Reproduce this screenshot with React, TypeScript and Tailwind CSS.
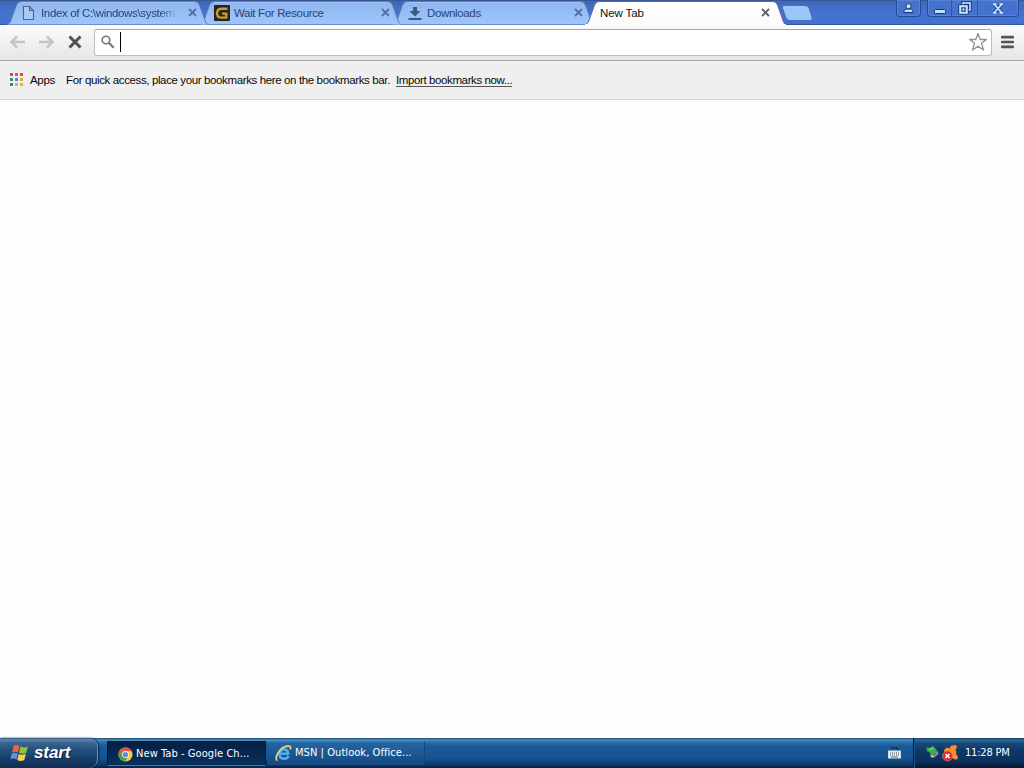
import type { ReactNode } from "react";

function TabShape({ active = false }: { active?: boolean }) {
  return (
    <svg className="absolute inset-0 h-[25px] w-[200px] overflow-visible" viewBox="0 0 200 25">
      <defs>
        <linearGradient id="inactiveTab" x1="0" y1="0" x2="0" y2="1">
          <stop offset="0" stopColor="#8fb5f0" />
          <stop offset="1" stopColor="#9fc6fb" />
        </linearGradient>
        <linearGradient id="activeTab" x1="0" y1="0" x2="0" y2="1">
          <stop offset="0" stopColor="#ffffff" />
          <stop offset="1" stopColor="#fbfbfb" />
        </linearGradient>
      </defs>
      <path
        d="M-1 24.5 C2 23.5 2.5 22 3.5 19 L8.5 5 Q10 1.5 13 1.5 H187 Q190 1.5 191.5 5 L196.5 19 C197.5 22 198 24 200 24.5"
        fill={active ? "url(#activeTab)" : "url(#inactiveTab)"}
        stroke={active ? "#56699a" : "#5e7cb4"}
        strokeWidth="1"
      />
      {!active && <path d="M13 2.5 H186" stroke="#a5c6f6" />}
      {active && <path d="M-1 24.5 H200" stroke="#fbfbfb" />}
    </svg>
  );
}

function Cross({ color }: { color: string }) {
  return (
    <svg className="h-[9px] w-[9px] shrink-0" viewBox="0 0 9 9">
      <path d="M1 1 L8 8 M8 1 L1 8" stroke={color} strokeWidth="1.8" />
    </svg>
  );
}

function Tab({ icon, title, active, layer }: { icon?: ReactNode; title: string; active?: boolean; layer: string }) {
  return (
    <div className={`relative h-[25px] w-[193px] shrink-0 ${layer}`}>
      <TabShape active={active} />
      <div className={`relative flex h-[25px] items-center ${active ? "pr-[9px] pl-[14px]" : "pr-[4px] pl-[13px]"}`}>
        {icon && <span className="mr-[4px] flex w-[16px] shrink-0 justify-center">{icon}</span>}
        <span
          className={`min-w-0 flex-1 text-[11.5px] leading-[16px] whitespace-nowrap ${
            active ? "tracking-[-0.1px] text-[#111]" : "tracking-[-0.34px] text-[#29446f]"
          } ${title.startsWith("Index") ? "[mask-image:linear-gradient(to_right,black_87%,transparent)]" : ""}`}
        >
          {title}
        </span>
        <span className="ml-[10px] flex">
          <Cross color={active ? "#626262" : "#53719f"} />
        </span>
      </div>
    </div>
  );
}

function PageIcon() {
  return (
    <svg className="h-[16px] w-[14px]" viewBox="0 0 14 16">
      <path d="M1.5 1.5 H7.5 L11.5 5.5 V14.5 H1.5 Z M7.5 1.5 V5.5 H11.5" fill="#a9c9f6" stroke="#52647d" strokeWidth="1.1" />
    </svg>
  );
}

function GIcon() {
  return (
    <svg className="h-[16px] w-[16px]" viewBox="0 0 16 16">
      <rect width="16" height="16" rx="1" fill="#27251f" />
      <path d="M13.5 3.7 H7 Q3.3 4 3 8 Q3 12.3 6.5 12.6 H12.2 V8.6 H8" fill="none" stroke="#c99d2b" strokeWidth="2.4" />
    </svg>
  );
}

function DownloadIcon() {
  return (
    <svg className="h-[14px] w-[14px]" viewBox="0 0 14 14">
      <path d="M5 1 H9 V5 H12.5 L7 10.5 L1.5 5 H5 Z M0.5 12 H13.5 V14 H0.5 Z" fill="#3c5979" />
    </svg>
  );
}

function WindowButtons() {
  return (
    <div className="-mt-px ml-auto flex h-[17px] items-start">
      <div className="mr-[6px] flex h-[17px] w-[25px] items-center justify-center rounded-b-[4px] border border-t-0 border-[#244b9f] bg-[#4572cc] shadow-[inset_0_0_0_1px_#5882d6]">
        <svg className="h-[11px] w-[11px]" viewBox="0 0 11 11">
          <path d="M1 8.2 Q1 6 5.5 6 Q10 6 10 8.2 V9.5 H1 Z" fill="#c4e3fc" stroke="#153572" />
          <circle cx="5.5" cy="3.2" r="2.6" fill="#c4e3fc" stroke="#153572" />
        </svg>
      </div>
      <div className="mr-[5px] flex h-[17px] overflow-hidden rounded-b-[4px] border border-t-0 border-[#244b9f] bg-[#4572cc] shadow-[inset_0_0_0_1px_#5882d6]">
        <div className="flex w-[24px] items-center justify-center border-r border-[#2d57ab]">
          <svg className="h-[13px] w-[12px]" viewBox="0 0 12 13">
            <rect x=".5" y="7.5" width="11" height="4" rx="1" fill="#c4e3fc" stroke="#153572" />
          </svg>
        </div>
        <div className="flex w-[26px] justify-center border-r border-[#2d57ab] pt-[1px]">
          <svg className="h-[14px] w-[14px]" viewBox="0 0 14 14">
            <rect x="5" y="2" width="7" height="7" fill="none" stroke="#153572" strokeWidth="3.4" />
            <rect x="5" y="2" width="7" height="7" fill="none" stroke="#c4e3fc" strokeWidth="1.6" />
            <rect x="2.2" y="5.2" width="6.6" height="6.6" fill="#35599e" stroke="#153572" strokeWidth="3.6" />
            <rect x="2.2" y="5.2" width="6.6" height="6.6" fill="#254c91" stroke="#c4e3fc" strokeWidth="2" />
            <rect x="4.5" y="7.5" width="2" height="2" fill="#c4e3fc" />
          </svg>
        </div>
        <div className="flex w-[40px] items-center justify-center">
          <svg className="h-[11px] w-[12px]" viewBox="0 0 12 11">
            <path d="M2.5 1.5 L9.5 9.5 M9.5 1.5 L2.5 9.5" stroke="#2a4f99" strokeWidth="4" />
            <path d="M2.5 1.5 L9.5 9.5 M9.5 1.5 L2.5 9.5 M1 1.2 H4.4 M7.6 1.2 H11 M1 9.8 H4.4 M7.6 9.8 H11" stroke="#c4e3fc" strokeWidth="1.8" />
          </svg>
        </div>
      </div>
    </div>
  );
}

function TitleBar() {
  return (
    <div className="relative flex h-[25px] border-t border-[#3a5795] bg-linear-to-b from-[#3e67b8] via-[#4473ce] to-[#4170cf] shadow-[inset_0_-1px_0_#33569e]">
      <div className="-mt-px flex pl-[8px]">
        <Tab layer="z-30" icon={<PageIcon />} title="Index of C:\windows\system" />
        <Tab layer="z-20" icon={<GIcon />} title="Wait For Resource" />
        <Tab layer="z-10" icon={<DownloadIcon />} title="Downloads" />
        <div className="relative z-40 -ml-px">
          <Tab layer="z-40" title="New Tab" active />
        </div>
        <svg className="mt-[5px] ml-[2px] h-[16px] w-[32px]" viewBox="0 0 32 16">
          <path d="M3 .5 H24 Q27 .5 28 3 L31 12 Q32 15.5 29 15.5 H9 Q6 15.5 5 13 L1.5 3 Q1 .5 3 .5 Z" fill="#9cc5fa" stroke="#4870b7" />
        </svg>
      </div>
      <WindowButtons />
    </div>
  );
}

function Toolbar() {
  return (
    <div className="flex h-[36px] items-center border-b border-[#a6a6a6] bg-linear-to-b from-[#fbfbfb] to-[#e6e6e6] pb-px">
      <svg className="ml-[9px] h-[14px] w-[17px]" viewBox="0 0 17 14">
        <path d="M16 7 H3 M8 1.5 L2.5 7 L8 12.5" fill="none" stroke="#c4c4c4" strokeWidth="2.5" />
      </svg>
      <svg className="ml-[12px] h-[14px] w-[17px]" viewBox="0 0 17 14">
        <path d="M1 7 H14 M9 1.5 L14.5 7 L9 12.5" fill="none" stroke="#c4c4c4" strokeWidth="2.5" />
      </svg>
      <svg className="ml-[13px] h-[14px] w-[14px]" viewBox="0 0 14 14">
        <path d="M1.5 1.5 L12.5 12.5 M12.5 1.5 L1.5 12.5" stroke="#505050" strokeWidth="3" />
      </svg>
      <div className="ml-[12px] flex h-[27px] w-[898px] items-center rounded-[3px] border border-[#bcbcbc] border-t-[#a7a7a7] bg-white">
        <svg className="ml-[6px] h-[14px] w-[14px]" viewBox="0 0 14 14">
          <circle cx="5" cy="5" r="3.8" fill="none" stroke="#777" strokeWidth="1.6" />
          <path d="M8 8 L12.7 12.7" stroke="#777" strokeWidth="2.3" />
        </svg>
        <div className="ml-[5px] h-[20px] w-px bg-black" />
        <svg className="mr-[3px] ml-auto h-[20px] w-[20px]" viewBox="0 0 20 20">
          <path
            d="M10 1.5 L12.2 7.5 H18.3 L13.5 11.3 L15.5 18 L10 14.2 L4.5 18 L6.5 11.3 L1.7 7.5 H7.8 Z"
            fill="#fff"
            stroke="#8f8f8f"
            strokeWidth="1.3"
            strokeLinejoin="round"
          />
        </svg>
      </div>
      <svg className="ml-[9px] h-[14px] w-[13px]" viewBox="0 0 13 14">
        <path d="M1.2 2.2 H11.8 M1.2 7 H11.8 M1.2 11.8 H11.8" stroke="#555" strokeWidth="2.7" strokeLinecap="round" />
      </svg>
    </div>
  );
}

function AppsIcon() {
  const colors = ["#d84a49", "#df5558", "#d94749", "#2b9c68", "#3e87dc", "#e1af29", "#2b9c55", "#e1b532", "#e1b532"];
  return (
    <svg className="-mt-px h-[13px] w-[13px]" viewBox="0 0 13 13">
      {colors.map((color, i) => (
        <rect key={i} x={(i % 3) * 5} y={Math.floor(i / 3) * 5} width="3" height="3" fill={color} />
      ))}
    </svg>
  );
}

function BookmarksBar() {
  return (
    <div className="flex h-[39px] items-center border-b border-[#d6d6d6] bg-[#efefef] pl-[10px] text-[11.5px] whitespace-nowrap text-[#080808]">
      <AppsIcon />
      <span className="mt-px ml-[7px] w-[36px] tracking-[-0.3px]">Apps</span>
      <span className="mt-px w-[330px] tracking-[-0.375px]">For quick access, place your bookmarks here on the bookmarks bar.</span>
      <span className="border-b border-[#555] leading-[12px] tracking-[-0.39px]">Import bookmarks now...</span>
    </div>
  );
}

function WindowsFlag() {
  return (
    <svg className="h-[18px] w-[19px]" viewBox="0 0 18 18">
      <path d="M3 2 Q6 0 9 2 L7.5 8.5 Q5 7 1.5 8.5 Z" fill="#e7683b" />
      <path d="M10 2.3 Q13 4.5 17.5 2.5 L15.7 8.7 Q12 10.5 8.5 8.8 Z" fill="#8fc641" />
      <path d="M1.2 9.5 Q4 8 7.2 9.7 L6 15.5 Q3 13.7 0 15.5 Z" fill="#5a93e6" />
      <path d="M8.2 10 Q11.5 11.5 15.4 9.7 L13.8 16 Q10 18 6.8 16 Z" fill="#f6d248" />
    </svg>
  );
}

function ChromeIcon() {
  return (
    <svg className="h-[15px] w-[15px] shrink-0" viewBox="0 0 16 16">
      <circle cx="8" cy="8" r="7.5" fill="#f4cb38" />
      <path d="M1.5 4.3 A7.5 7.5 0 0 1 14.5 4.3 L8 4.5 L4.7 10 Z" fill="#df5547" />
      <path d="M1.5 4.3 L5 10 L10.5 10 L7.6 15.5 A7.5 7.5 0 0 1 1.5 4.3 Z" fill="#42a15b" />
      <circle cx="8" cy="8" r="3.7" fill="#f5f5ef" />
      <circle cx="8" cy="8" r="2.8" fill="#4f91da" />
    </svg>
  );
}

function ExplorerIcon() {
  return (
    <svg className="h-[17px] w-[17px] shrink-0" viewBox="0 0 17 17">
      <path d="M13.5 11 Q12.3 13.8 9 13.8 Q4.5 13.5 4.5 9 Q4.9 4.5 9 4.5 Q13 4.5 13 8.8 H5" fill="none" stroke="#4fb0ee" strokeWidth="2.6" />
      <path d="M2.5 15.5 C-1.5 14 4 3 12 1.2 Q17 .3 15 4.5" fill="none" stroke="#efd27a" strokeWidth="1.7" />
    </svg>
  );
}

function KeyboardIcon() {
  return (
    <svg className="h-[14px] w-[13px]" viewBox="0 0 13 14">
      <path d="M3 1 L4.5 2.5 L6 1.5 L7.5 2.5 L9 1.5 L10 3 L9.5 4.5" stroke="#0b1c33" fill="none" />
      <rect x=".5" y="5" width="12" height="7" fill="#f2f2ee" stroke="#d5dce1" />
      <path d="M2 7 H11 M2 9 H11" stroke="#263f57" strokeDasharray="1 1" />
      <path d="M3 11 H10" stroke="#53687b" />
    </svg>
  );
}

function DeviceIcon() {
  return (
    <svg className="-mt-[2px] h-[16px] w-[15px]" viewBox="0 0 15 16">
      <path d="M5 10 L12 6 L13.5 10 L8 14 L5.5 13 Z" fill="#c3cacd" stroke="#4a5862" strokeWidth=".8" />
      <path d="M8 11.5 L12 9" stroke="#354c60" strokeWidth="1.3" />
      <path d="M1.5 3 L4 4 L8 2 L11 5 L12 7 L6 11 L4.5 8 L2 7.5 Z" fill="#35b44f" stroke="#1c7036" strokeWidth=".7" />
      <path d="M4 5.5 L8 4" stroke="#8ae08c" />
    </svg>
  );
}

function AlertIcon() {
  return (
    <svg className="h-[18px] w-[17px]" viewBox="0 0 17 18">
      <path d="M3 5 Q5 3 8 4.5 Q8 1 11 1.5 Q14 0 15 3 L13.5 6 Q15 7.5 14 9.5 L16 13 Q16 16 13 15.5 L10 14 L4 15 L3 9 Q1 7 3 5 Z" fill="#ff8c2b" />
      <circle cx="5.5" cy="12" r="5" fill="#d92d2d" stroke="#f17d65" strokeWidth=".6" />
      <path d="M3.5 10 L7.5 14 M7.5 10 L3.5 14" stroke="#fff" strokeWidth="1.6" />
    </svg>
  );
}

function Taskbar() {
  return (
    <div className="flex h-[30px] items-stretch bg-[linear-gradient(to_bottom,#16456d_0px,#4e91bd_2px,#2e71aa_4px,#195a98_8px,#165493_20px,#0c3867_27px,#071f3d_30px)] font-['DejaVu_Sans_Condensed','DejaVu_Sans',sans-serif] text-[11px] text-white">
      <div className="flex w-[98px] items-center rounded-r-[9px] border-r border-[#6292be] bg-[linear-gradient(to_bottom,#315b82_0px,#6288ac_2px,#3f6a96_4px,#285480_10px,#163f6c_20px,#102d50_30px)] pl-[10px] shadow-[1px_0_2px_#062b51]">
        <WindowsFlag />
        <span className="ml-[5px] font-['Liberation_Sans',Arial,sans-serif] text-[17px] leading-[20px] font-bold tracking-[-0.1px] italic [text-shadow:1px_1px_1px_#102541]">start</span>
      </div>
      <div className="mt-[3px] ml-[9px] flex h-[25px] w-[159px] items-center border border-[#031b38] border-b-[#3a78a9] bg-linear-to-b from-[#051f43] to-[#073160] pt-px pl-[10px]">
        <ChromeIcon />
        <span className="ml-[3px] tracking-[0.07px] whitespace-nowrap">New Tab - Google Ch...</span>
      </div>
      <div className="mt-[3px] ml-[2px] flex h-[24px] w-[157px] items-center border-t border-r border-t-[#3c80b4] border-r-[#164577] bg-linear-to-b from-[#2467a4] to-[#144984] pl-[7px]">
        <ExplorerIcon />
        <span className="ml-[3px] tracking-[0.06px] whitespace-nowrap">MSN | Outlook, Office...</span>
      </div>
      <div className="ml-auto flex w-[25px] items-center">
        <KeyboardIcon />
      </div>
      <div className="flex w-[111px] items-center border-l border-[#031b38] bg-[linear-gradient(to_bottom,#143a5d_0px,#326c96_2px,#174a7a_5px,#0d3869_12px,#0b315e_23px,#06182f_30px)] pl-[11px] shadow-[inset_1px_0_0_#20558a]">
        <DeviceIcon />
        <span className="ml-[2px]"><AlertIcon /></span>
        <span className="mt-px ml-[6px] tracking-[-0.2px] whitespace-nowrap">11:28 PM</span>
      </div>
    </div>
  );
}

export default function App() {
  return (
    <div className="flex h-screen w-screen flex-col overflow-hidden bg-white font-['Liberation_Sans',Arial,sans-serif]">
      <TitleBar />
      <Toolbar />
      <BookmarksBar />
      <main className="flex-1 bg-[#fefefe]" />
      <Taskbar />
    </div>
  );
}
